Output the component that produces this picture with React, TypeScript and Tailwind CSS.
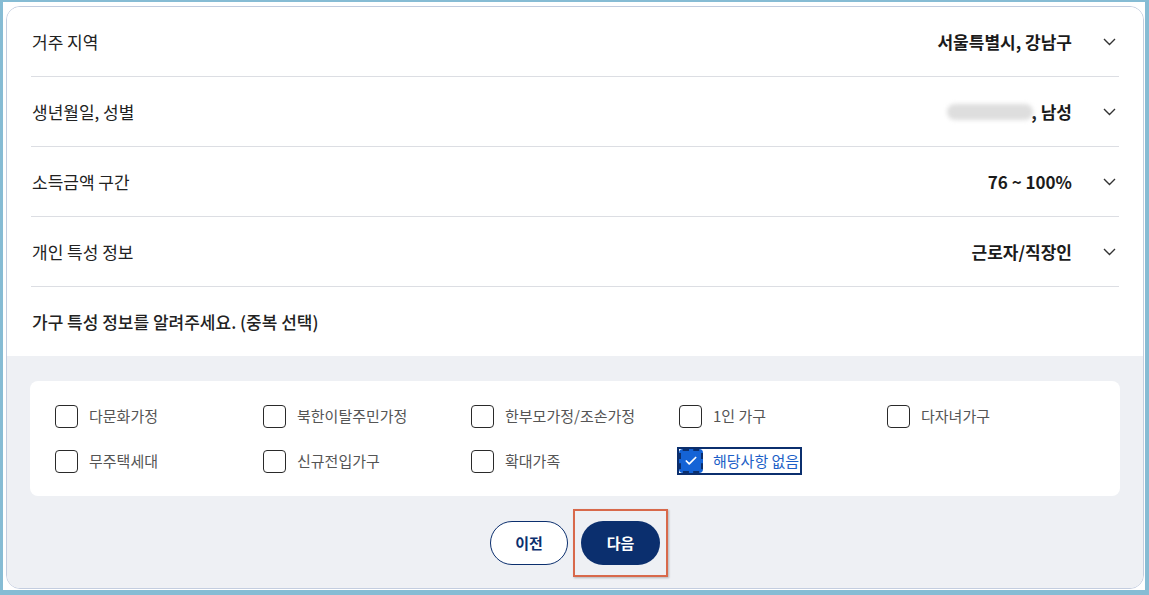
import { Check } from "lucide-react";

const font = "font-['Noto_Sans_CJK_KR','Noto_Sans',sans-serif]";

type Row = { label: string; value: string; blurred?: boolean };

const rows: Row[] = [
  { label: "거주 지역", value: "서울특별시, 강남구" },
  { label: "생년월일, 성별", value: ", 남성", blurred: true },
  { label: "소득금액 구간", value: "76 ~ 100%" },
  { label: "개인 특성 정보", value: "근로자/직장인" },
];

const options = [
  "다문화가정",
  "북한이탈주민가정",
  "한부모가정/조손가정",
  "1인 가구",
  "다자녀가구",
  "무주택세대",
  "신규전입가구",
  "확대가족",
  "해당사항 없음",
];

function Chevron() {
  return (
    <svg width="13" height="8" viewBox="0 0 13 8" className="ml-[31px] mr-[3px] text-[#333]">
      <path d="M1 1 L6.5 6.5 L12 1" fill="none" stroke="currentColor" strokeWidth="1.4" />
    </svg>
  );
}

function InfoRow({ row }: { row: Row }) {
  return (
    <div className="flex h-[70px] items-center border-b border-[#dcdee3] pl-[1px]">
      <span className="text-[17px] text-[#222]">{row.label}</span>
      <div className="ml-auto flex items-center">
        {row.blurred && (
          <span className="mr-[-2px] h-[16px] w-[86px] rounded-full bg-[#dedede] blur-[2px]" />
        )}
        <span className="text-[17px] font-bold text-[#1b1b1b]">{row.value}</span>
        <Chevron />
      </div>
    </div>
  );
}

function Option({ label, checked }: { label: string; checked?: boolean }) {
  if (checked) {
    return (
      <div className="flex items-center">
        <div className="ml-[-2px] flex items-center gap-[10px] border-2 border-[#0b2f6e] pr-[1px]">
          <span className="flex h-[24px] w-[24px] items-center justify-center rounded-[4px] border-2 border-dashed border-[#0b2f6e] bg-[#1463d6]">
            <Check className="h-[14px] w-[14px] text-white" strokeWidth={3} />
          </span>
          <span className="text-[15px] leading-[24px] text-[#1d5fc7]">{label}</span>
        </div>
      </div>
    );
  }
  return (
    <div className="flex items-center gap-[11px]">
      <span className="h-[23px] w-[23px] rounded-[4px] border-[1.5px] border-[#2a2a2a] bg-white" />
      <span className="text-[15px] text-[#555]">{label}</span>
    </div>
  );
}

export default function App() {
  return (
    <div className={`${font} h-[595px] w-[1149px] bg-[#86bcd4] pb-[5px] pl-[3px] pr-[4px] pt-[2px]`}>
      <div className="h-full w-full bg-white pb-[1px] pl-[3px] pr-[1px] pt-[4px]">
        <div className="flex h-full flex-col overflow-hidden rounded-[14px] border border-[#c3cddf]">
          <div className="bg-white px-[24px]">
            {rows.map((r) => (
              <InfoRow key={r.label} row={r} />
            ))}
            <div className="flex h-[69px] items-center pl-[1px]">
              <span className="text-[17px] font-medium text-[#222]">
                가구 특성 정보를 알려주세요. (중복 선택)
              </span>
            </div>
          </div>
          <div className="flex flex-1 flex-col bg-[#eef0f4] px-[23px] pt-[25px]">
            <div className="grid h-[115px] grid-cols-5 content-start gap-y-[19px] rounded-[8px] bg-white px-[25px] pt-[24px]">
              {options.map((o) => (
                <Option key={o} label={o} checked={o === "해당사항 없음"} />
              ))}
            </div>
            <div className="mt-[25px] flex justify-center gap-[13px]">
              <button className="h-[44px] w-[78px] rounded-full border border-[#0b2f6e] bg-white text-[15px] font-bold text-[#0b2f6e]">
                이전
              </button>
              <div className="relative">
                <span className="absolute -bottom-[12px] -left-[8px] -right-[8px] -top-[12px] border-2 border-[#d8694b] shadow-[1px_1px_2px_rgba(0,0,0,0.25)]" />
                <button className="relative h-[44px] w-[79px] rounded-full bg-[#0b2f6e] text-[15px] font-bold text-white">
                  다음
                </button>
              </div>
            </div>
          </div>
        </div>
      </div>
    </div>
  );
}
